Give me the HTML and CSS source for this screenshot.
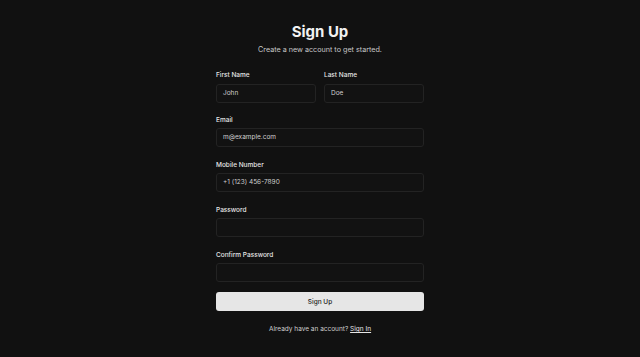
FILE: index.html
```html
<!DOCTYPE html>
<html>
<head>
<meta charset="utf-8">
<link rel="stylesheet" href="styles.css">
</head>
<body>
<main class="page">
  <form class="card">
    <h1 class="title">Sign Up</h1>
    <p class="subtitle">Create a new account to get started.</p>
    <div class="row">
      <div class="field">
        <label class="label">First Name</label>
        <div class="input">John</div>
      </div>
      <div class="field">
        <label class="label">Last Name</label>
        <div class="input">Doe</div>
      </div>
    </div>
    <div class="field">
      <label class="label">Email</label>
      <div class="input">m@example.com</div>
    </div>
    <div class="field">
      <label class="label">Mobile Number</label>
      <div class="input">+1 (123) 456-7890</div>
    </div>
    <div class="field">
      <label class="label">Password</label>
      <div class="input"></div>
    </div>
    <div class="field">
      <label class="label">Confirm Password</label>
      <div class="input"></div>
    </div>
    <button type="button" class="btn">Sign Up</button>
    <p class="footer">Already have an account? <a class="link">Sign In</a></p>
  </form>
</main>
</body>
</html>
```
FILE: styles.css
```css
* { box-sizing: border-box; }
html, body { margin: 0; padding: 0; }
body {
  background: #111111;
  color: #e8e8e8;
  font-family: Inter, "Noto Sans", sans-serif;
  width: 640px;
  height: 357px;
  overflow: hidden;
}
.page {
  display: flex;
  justify-content: center;
  padding-top: 23px;
}
.card {
  width: 208px;
  display: flex;
  flex-direction: column;
}
.title {
  margin: 0;
  text-align: center;
  font-size: 15px;
  font-weight: 700;
  line-height: 18px;
  color: #f2f2f2;
}
.subtitle {
  margin: 4px 0 0;
  text-align: center;
  font-size: 7.2px;
  line-height: 10px;
  color: #c8c8c8;
}
.row {
  display: grid;
  grid-template-columns: 1fr 1fr;
  gap: 8px;
  margin-top: 16px;
}
.row .field { margin-top: 0; }
.row .input { margin-top: 5px; }
.field {
  display: flex;
  flex-direction: column;
  margin-top: 14px;
}
.row + .field { margin-top: 13px; }
.label {
  font-size: 6.5px;
  font-weight: 500;
  line-height: 8px;
  color: #e6e6e6;
}
.input {
  margin-top: 4px;
  height: 19px;
  border: 1px solid #232323;
  border-radius: 3px;
  background: #121212;
  padding: 0 6px;
  font-size: 6.5px;
  line-height: 17px;
  color: #cfcfcf;
}
.btn {
  margin-top: 10px;
  height: 19px;
  border: none;
  border-radius: 3px;
  background: #e6e6e6;
  color: #222;
  font-family: inherit;
  font-size: 6.5px;
  font-weight: 500;
}
.footer {
  margin: 14px 0 0;
  text-align: center;
  font-size: 6.5px;
  line-height: 9px;
  color: #cfcfcf;
}
.link {
  color: #e6e6e6;
  text-decoration: underline;
}
```
